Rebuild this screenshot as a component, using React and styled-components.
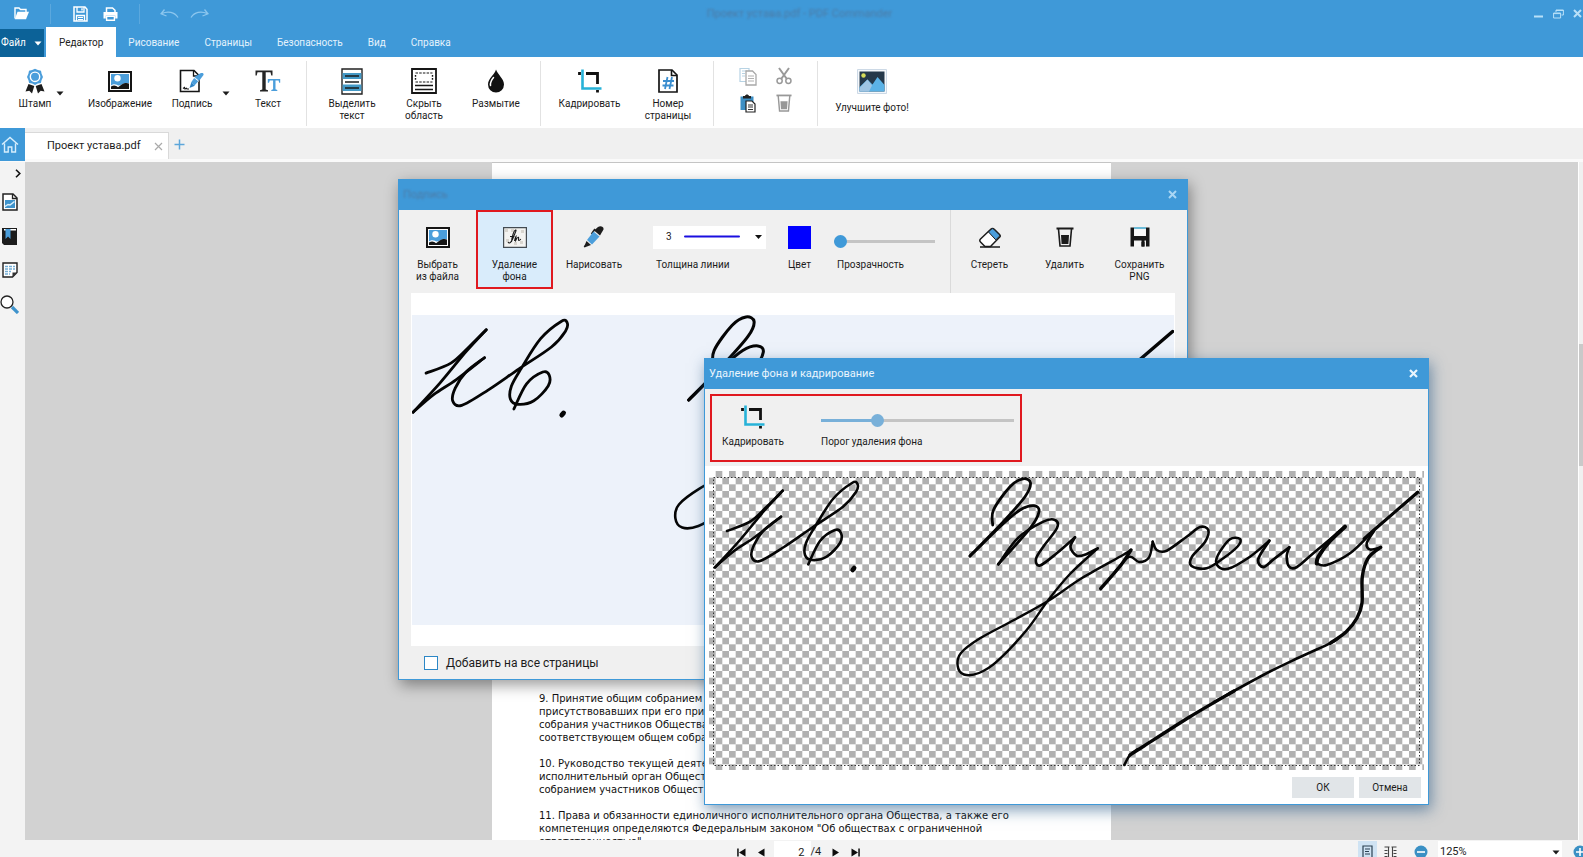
import React, { useState } from "react";
import styled, { createGlobalStyle, css } from "styled-components";

const GlobalStyle = createGlobalStyle`
  * {
    box-sizing: border-box;
  }
  body {
    margin: 0;
    overflow: hidden;
    font-family: Roboto, "Liberation Sans", sans-serif;
    font-size: 10px;
    line-height: 12px;
    color: #1c1c1c;
  }
  button, input, select {
    margin: 0;
    padding: 0;
    border: 0;
    background: none;
    font: inherit;
    color: inherit;
  }
  svg {
    display: block;
    flex: none;
  }
`;

const BLUE = "#3f99d8";

/* ---------- window frame ---------- */

const AppWindow = styled.div`
  display: flex;
  flex-direction: column;
  height: 100vh;
`;

const Header = styled.header`
  background: ${BLUE};
  color: #e4f2fc;
`;

const TitleBar = styled.div`
  display: grid;
  grid-template-columns: 1fr auto 1fr;
  align-items: center;
  height: 27px;
`;

const QuickBar = styled.div`
  display: flex;
  align-items: center;
  padding-left: 6px;
`;

const IconButton = styled.button`
  display: flex;
  align-items: center;
  justify-content: center;
  width: ${(p) => p.$w || 20}px;
  height: ${(p) => p.$h || 20}px;
`;

const QuickDivider = styled.span`
  width: 1px;
  height: 20px;
  margin: 0 14px;
  background: #5ba8de;
`;

const AppTitle = styled.div`
  padding-left: 16px;
  color: #4c7ba6;
  font-size: 11px;
  filter: blur(1px);
`;

const WindowButtons = styled.div`
  display: flex;
  justify-content: flex-end;
  color: #b9e0f8;
`;

const MenuBar = styled.nav`
  display: flex;
  height: 30px;
`;

const FileButton = styled.button`
  display: flex;
  align-items: center;
  gap: 8px;
  width: 44px;
  margin: 2px 2px 0 0;
  padding-left: 1px;
  background: #0c6298;
  color: #fff;
`;

const MenuTab = styled.button`
  padding: 2px 13px 0 12px;
  ${(p) =>
    p.$active &&
    css`
      padding: 2px 13px 0;
      background: #fff;
      color: #222;
    `}
`;

const Ribbon = styled.div`
  display: flex;
  height: 71px;
  padding: 4px 0 2px;
  background: #fff;
`;

const RibbonGroup = styled.div`
  display: flex;
  padding: 5px ${(p) => p.$right}px 0 ${(p) => p.$left}px;
  border-right: ${(p) => (p.$last ? 0 : "1px solid #e2e2e2")};
`;

const Tool = styled.button`
  display: flex;
  flex-direction: column;
  align-items: center;
  gap: ${(p) => p.$gap || 2}px;
  width: ${(p) => p.$w}px;
  white-space: nowrap;
`;

const IconSlot = styled.span`
  display: flex;
  align-items: ${(p) => (p.$end ? "flex-end" : "center")};
  justify-content: center;
  height: 30px;
`;

const CaretButton = styled.button`
  display: flex;
  width: 22px;
  height: 40px;
  padding-top: 25px;
`;

const ClipboardGrid = styled.div`
  display: grid;
  grid-template-columns: 36px 36px;
  grid-auto-rows: 27px;
  justify-items: center;
`;

/* ---------- document tabs and work area ---------- */

const TabStrip = styled.div`
  display: flex;
  height: 34px;
  background: #f0f0f0;
  border-bottom: 3px solid #fafafa;
`;

const HomeButton = styled.button`
  display: flex;
  align-items: center;
  justify-content: center;
  width: 25px;
  height: 33px;
  padding-right: 6px;
  background: ${BLUE};
  color: #d8eefc;
`;

const DocTab = styled.div`
  display: flex;
  align-items: center;
  justify-content: space-between;
  width: 144px;
  margin-top: 4px;
  padding-left: 22px;
  border: 1px solid #d9d9d9;
  border-width: 1px 1px 0 0;
  background: #fff;
  font-size: 11px;
  white-space: nowrap;
`;

const TabClose = styled(IconButton)`
  color: #aaa;
`;

const WorkArea = styled.div`
  display: flex;
  flex: 1;
  min-height: 0;
`;

const SideBar = styled.aside`
  display: flex;
  flex-direction: column;
  width: 25px;
  background: #f3f3f3;
`;

const SideChevron = styled(IconButton)`
  width: 25px;
  height: 23px;
  padding-left: 10px;
`;

const SideButton = styled(IconButton)`
  width: 19px;
  height: 34px;
`;

const Desk = styled.main`
  display: flex;
  justify-content: center;
  flex: 1;
  min-width: 0;
  overflow: hidden;
  background: #d2d2d2;
`;

const Sheet = styled.article`
  width: 619px;
  padding: 529px 47px 0;
  border-top: 1px solid #c4c4c4;
  background: #fff;
  font-family: "DejaVu Sans", sans-serif;
  font-size: 10px;
  line-height: 13px;
  color: #111;
  white-space: pre;
  p {
    margin: 0 0 13px;
  }
`;

const ScrollTrack = styled.div`
  width: 5px;
  padding-top: 182px;
  border-left: 1px solid #fff;
  background: #f0f0f0;
`;

const ScrollThumb = styled.div`
  height: 122px;
  background: #c9c9c9;
`;

const StatusBar = styled.footer`
  display: grid;
  grid-template-columns: 1fr auto 1fr;
  height: 17px;
  overflow: hidden;
  background: #f3f3f3;
  line-height: 10px;
`;

const Pager = styled.div`
  display: flex;
  align-items: center;
  height: 24px;
  padding-left: 13px;
`;

const PageInput = styled.input`
  width: 37px;
  height: 22px;
  margin-left: 4px;
  padding-right: 6px;
  background: #fff;
  font-size: 11px;
  text-align: right;
`;

const PageTotal = styled.span`
  width: 16px;
  font-size: 11px;
`;

const ViewTools = styled.div`
  display: flex;
  align-items: center;
  justify-content: flex-end;
  height: 24px;
  margin-right: -4px;
`;

const ViewButton = styled(IconButton)`
  width: 19px;
  height: 22px;
  margin-right: 4px;
  background: ${(p) => (p.$active ? "#cfe3f3" : "none")};
`;

const ZoomBox = styled.div`
  display: grid;
  align-items: center;
  width: 124px;
  height: 22px;
  margin-right: 11px;
  background: #fff;
  > * {
    grid-area: 1 / 1;
  }
  > svg {
    justify-self: end;
    margin-right: 2px;
    pointer-events: none;
  }
`;

const ZoomSelect = styled.select`
  appearance: none;
  height: 20px;
  padding-left: 2px;
  font-size: 11px;
`;

/* ---------- dialogs ---------- */

const Dialog = styled.section`
  position: absolute;
  left: ${(p) => p.$x}px;
  top: ${(p) => p.$y}px;
  width: ${(p) => p.$w}px;
  border: 1px solid ${BLUE};
  border-top: 0;
  background: ${(p) => p.$bg};
  box-shadow: 2px 5px 14px ${(p) => p.$shadow};
`;

const DialogTitle = styled.header`
  display: flex;
  align-items: center;
  justify-content: space-between;
  height: 31px;
  padding: 0 5px 0 4px;
  background: ${BLUE};
  color: ${(p) => (p.$inactive ? "#a9d6f4" : "#eaf5fd")};
  font-size: 11px;
`;

const FadedTitle = styled.span`
  color: #4c7ba6;
  filter: blur(1px);
`;

const DialogTools = styled.div`
  display: flex;
  height: 83px;
`;

const DialogTool = styled(Tool)`
  gap: 7px;
  padding-top: 12px;
`;

const MarkedTool = styled(DialogTool)`
  height: 79px;
  padding-top: 10px;
  border: 2px solid #e0191f;
  background: #d9ecfb;
`;

const Field = styled.label`
  display: flex;
  flex-direction: column;
  gap: 7px;
  width: ${(p) => p.$w}px;
  margin-left: ${(p) => p.$left}px;
  padding-top: 12px;
  white-space: nowrap;
`;

const FieldText = styled.span`
  padding-left: ${(p) => p.$indent || 0}px;
`;

const WidthBox = styled.span`
  display: grid;
  align-items: center;
  width: 113px;
  height: 23px;
  background: #fff;
  > * {
    grid-area: 1 / 1;
  }
  > svg {
    justify-self: end;
    margin-right: 4px;
    pointer-events: none;
  }
`;

const WidthSelect = styled.select`
  appearance: none;
  height: 23px;
  padding-left: 13px;
`;

const ColorInput = styled.input`
  appearance: none;
  width: 23px;
  height: 23px;
  &::-webkit-color-swatch-wrapper {
    padding: 0;
  }
  &::-webkit-color-swatch {
    border: 0;
    border-radius: 0;
  }
`;

const Range = styled.input`
  appearance: none;
  width: 100%;
  height: ${(p) => p.$h || 16}px;
  &::-webkit-slider-runnable-track {
    height: 3px;
    background: linear-gradient(
      to right,
      ${(p) => p.$fill} ${(p) => p.value}%,
      #c4c4c4 ${(p) => p.value}%
    );
  }
  &::-webkit-slider-thumb {
    appearance: none;
    width: 13px;
    height: 13px;
    margin-top: -5px;
    border-radius: 50%;
    background: ${(p) => p.$fill};
  }
`;

const ToolsDivider = styled.span`
  width: 1px;
  margin: 0 1px 0 auto;
  background: #dadada;
`;

const RightTools = styled.div`
  display: flex;
  margin-right: 10px;
`;

const Paper = styled.div`
  height: 353px;
  margin: 0 12px;
  padding: 22px 1px 21px 1px;
  background: #fff;
`;

const PaperInner = styled.div`
  height: 310px;
  background: #edf2fa;
`;

const DialogFooter = styled.footer`
  display: flex;
  align-items: center;
  height: 33px;
  padding-left: 25px;
`;

const CheckLabel = styled.label`
  display: flex;
  align-items: center;
  gap: 8px;
  font-size: 12px;
`;

const CheckBox = styled.input`
  appearance: none;
  width: 14px;
  height: 14px;
  border: 1px solid #2c87c6;
  background: #fff;
`;

const CropBar = styled.div`
  height: 77px;
  padding: 5px 0 0 5px;
  background: #f0f0f0;
`;

const CropMark = styled.div`
  display: flex;
  width: 312px;
  height: 68px;
  padding-left: 6px;
  border: 2px solid #e0191f;
`;

const CropTool = styled(Tool)`
  gap: 4px;
  padding-top: 6px;
`;

const CropField = styled(Field)`
  gap: 8px;
  padding-top: 16px;
`;

const Preview = styled.div`
  padding: 5px 4px 0;
`;

const DialogButtons = styled.footer`
  display: flex;
  justify-content: flex-end;
  gap: 5px;
  padding: 7px 7px 6px;
`;

const PushButton = styled.button`
  width: 62px;
  height: 21px;
  background: #e1e5e8;
`;

/* ---------- signature ---------- */

// every stroke is a line width and a list of points, drawn as a smooth curve
const strokes = [
  [2.6, [13, 54], [36, 44.7], [52.7, 29.7], [68.7, 13.7]],
  [2.6, [68.7, 13.7], [50, 34], [26, 63], [1, 90.3]],
  [2.6, [1, 90.3], [20, 74], [41, 60], [67, 39.7]],
  [2.6, [67, 39.7], [50, 53], [40, 68], [37.7, 80], [46, 84], [70, 70], [99, 50],
    [129, 29.7], [142, 15], [143.5, 7], [138, 6], [119, 22], [101, 49.7], [92, 66],
    [91, 78], [98, 83], [112.7, 79.7], [126, 66], [127, 56], [121, 53], [106, 64],
    [94.3, 87.3]],
  [2.8, [278.7, 48], [279.5, 33], [296, 9.7], [309, 1.8], [316.5, 6], [311, 19.7],
    [289.3, 44.7], [256, 79]],
  [2.8, [256, 79], [286, 49.7], [306, 33], [320, 28.7], [325, 34.7], [316, 51.3],
    [284.3, 87.3]],
  [2.6, [284.3, 87.3], [304, 61], [329.3, 44.7], [341, 43], [343, 51], [329.3, 69.7],
    [322, 82], [326, 88.5], [342.7, 76.3], [361, 60.3]],
  [2.6, [361, 60.3], [356.5, 70], [362.7, 78.7], [372.7, 77], [383.7, 71.3]],
  [2.4, [383.7, 71.3], [356, 97], [334.3, 123], [312.7, 153], [282.7, 184.7],
    [265, 196], [250, 197.5], [243.7, 189], [247, 176], [266, 161.3], [300, 143],
    [334, 124], [368, 101], [409, 78], [417, 73]],
  [3.4, [417, 73], [407, 88], [386.7, 111.7]],
  [2.4, [401, 95], [415, 80], [425, 85], [435, 80.5], [438.7, 64.7]],
  [2.6, [438.7, 64.7], [442.7, 73], [452.7, 73.7], [472.7, 59.7], [486, 50],
    [494.3, 53], [491, 65], [478, 79.7], [477.5, 89], [492.7, 91.3], [509.3, 81.3],
    [524, 69], [526, 62], [516, 62.3], [504, 78], [503, 88], [514, 91.8],
    [536, 79.7], [555.3, 63.7]],
  [2.8, [555.3, 63.7], [544.3, 82], [549.3, 90], [560, 82], [575.3, 70.3]],
  [2.6, [575.3, 70.3], [572.7, 79.7], [575.5, 90], [583, 90], [599.3, 76.3],
    [631, 49.7]],
  [4, [631, 49.7], [616, 64], [604.3, 79.7], [602.7, 86.5]],
  [2.6, [602.7, 86.5], [612.7, 88], [636, 76.3], [657, 56.3]],
  [3.2, [650, 62], [660, 53], [703.7, 15.3]],
  [2.6, [660, 54], [652.7, 66.3], [656, 72.5], [666.7, 70.3]],
  [3.4, [666.7, 70.3], [654, 81.3], [648.3, 99.7], [648, 126], [643, 141],
    [632, 155], [616, 166.3]],
  [2.6, [624, 161.5], [616, 166.3], [584, 181], [549.3, 198], [500, 225]],
  [3.4, [520, 214], [476, 239.7], [430, 269], [416, 278]],
  [2.6, [424, 272], [416, 278], [410.3, 288]],
];

function smooth(points) {
  let d = `M${points[0]}`;
  for (let i = 0; i < points.length - 1; i++) {
    const a = points[i - 1] || points[i];
    const b = points[i];
    const c = points[i + 1];
    const e = points[i + 2] || c;
    d += `C${b[0] + (c[0] - a[0]) / 6},${b[1] + (c[1] - a[1]) / 6} `;
    d += `${c[0] - (e[0] - b[0]) / 6},${c[1] - (e[1] - b[1]) / 6} ${c}`;
  }
  return d;
}

const SignatureInk = () => (
  <g fill="none" stroke="#050505" strokeLinecap="round" strokeLinejoin="round">
    {strokes.map(([width, ...points], i) => (
      <path key={i} d={smooth(points)} strokeWidth={width} />
    ))}
    <path d="M138.600 93L140.200 91" strokeWidth="4.500" />
  </g>
);

/* ---------- icons ---------- */

const Caret = ({ size = 8 }) => (
  <svg width={size} height="5" viewBox="0 0 8 5">
    <path d="M0.5 0.5h7L4 4.5z" fill="currentColor" />
  </svg>
);

const CloseIcon = ({ size = 9, weight = 2 }) => (
  <svg width={size} height={size} viewBox="0 0 9 9">
    <path d="M1 1l7 7M8 1L1 8" stroke="currentColor" strokeWidth={weight} />
  </svg>
);

const FolderIcon = () => (
  <svg width="15" height="13" viewBox="0 0 15 13">
    <path d="M1 11.5V1h4l1.5 1.5H12V5" fill="none" stroke="#fff" strokeWidth="1.4" />
    <path d="M3.5 4.8H15L12 12.2H0.8z" fill="#fff" />
  </svg>
);

const DiskIcon = () => (
  <svg width="15" height="16" viewBox="0 0 15 16">
    <path d="M1 1h11l2 2.2V15H1z" fill="none" stroke="#fff" strokeWidth="1.5" />
    <path d="M4 1v5h7V1M3.5 15V9.5h8V15" fill="none" stroke="#fff" strokeWidth="1.3" />
    <path d="M8.3 2.2h1.4v2.4H8.3zM5 11h5v1H5zM5 13h5v1H5z" fill="#fff" />
  </svg>
);

const PrinterIcon = () => (
  <svg width="15" height="14" viewBox="0 0 15 14">
    <path d="M3.5 5V1h6L12 3.3V5" fill="none" stroke="#fff" strokeWidth="1.5" />
    <path d="M0.5 5h14v6.5h-2.3V8.5H2.8v3H0.5z" fill="#fff" />
    <path d="M3.6 9.2h7.8v4H3.6z" fill="none" stroke="#fff" strokeWidth="1.4" />
  </svg>
);

const UndoIcon = ({ flip }) => (
  <svg width="19" height="10" viewBox="0 0 19 10">
    <path
      d="M4.5 0.5L1 4.8L6.5 7M1.5 4.6C8 1.8 14.5 3 18 8.5"
      transform={flip ? "matrix(-1 0 0 1 19 0)" : undefined}
      fill="none"
      stroke="#8cc6ee"
      strokeWidth="1.3"
    />
  </svg>
);

const MinimizeIcon = () => (
  <svg width="9" height="9" viewBox="0 0 9 9">
    <path d="M0 7.5h9" stroke="currentColor" strokeWidth="2" />
  </svg>
);

const RestoreIcon = () => (
  <svg width="11" height="10" viewBox="0 0 11 10">
    <path d="M0.6 4h7v5h-7zM0.6 4.6h7M3 3V1h7.4v5H8.5M3 1.5h7" fill="none" stroke="currentColor" />
  </svg>
);

const StampIcon = () => (
  <svg width="20" height="26" viewBox="0 0 20 26">
    <path d="M3.5 16L0.5 23.5l3.8-.7L7 25.4 9.3 18zM16.5 16l3 7.5-3.8-.7-2.7 2.6L10.7 18z" fill="#1d1d1d" />
    <path d="M10 0.8l2.9 1.3 3.1.6.6 3.1L18 9l-1.4 2.9-.7 3-3.1.7L10 17l-2.8-1.4-3.1-.7-.7-3L2 9l1.4-3.2.6-3.1 3.1-.6z" fill="#4b9edb" />
    <circle cx="10" cy="8.8" r="4.7" fill="#4b9edb" stroke="#fff" strokeWidth="1.4" />
  </svg>
);

const PictureIcon = () => (
  <svg width="24" height="21" viewBox="0 0 24 21">
    <path d="M1 1h22v19H1z" fill="#fff" stroke="#151515" strokeWidth="2" />
    <path d="M3 3h18v11L3 15z" fill="#4b9edb" />
    <circle cx="9.5" cy="7.3" r="3.2" fill="#fff" />
    <path d="M3 14.5c3-2.500 6-1 8 .5 2.500-2 6-3.500 10-3V18H3z" fill="#fff" />
    <path d="M3 15.500c3-2 5-1 7 .7 2.500-1.200 4-3.700 7-4.200 2-.2 3 0 4 .6V18H3z" fill="#151515" />
  </svg>
);

const SignIcon = () => (
  <svg width="26" height="24" viewBox="0 0 26 24">
    <path d="M1.500 1.500h13.500l5 5V22.500H1.500z" fill="#fff" stroke="#151515" strokeWidth="1.600" />
    <path d="M14.500 1.500V7h5.500" fill="none" stroke="#151515" strokeWidth="1.300" />
    <path d="M10.500 19l1.800-5.500 3.500 3.200z" fill="#2e83c4" />
    <path d="M12 13.500l3.500-5 4 3.500-4 4.500z" fill="#4b9edb" />
    <path d="M15.500 8l5.500-3.500c2-1 4-.5 3.500 1.500L20 12z" fill="#4b9edb" />
    <path d="M15 8.500l5 4" stroke="#fff" strokeWidth="0.8" />
    <path d="M4 19.500l1.500-1 .5 1.500 1.500-.8.500.8h2" fill="none" stroke="#151515" strokeWidth="1.200" />
  </svg>
);

const TextIcon = () => (
  <svg width="26" height="24" viewBox="0 0 26 24">
    <path d="M0.500 1.500h17v5h-1.200L15.500 3.300H10.700V20.500l2.300.7V22.500H5v-1.300l2.300-.7V3.300H2.500L1.700 6.500H0.500z" fill="#242424" />
    <path d="M12.800 10h12.400v3.800h-1l-.6-2.200H20.500V20.300l1.800.6V22h-6v-1.100l1.800-.6V11.600h-3.300l-.8 2.200h-1.200z" fill="#4b9edb" />
  </svg>
);

const HighlightIcon = () => (
  <svg width="22" height="27" viewBox="0 0 22 27">
    <path d="M1 1h20v25H1z" fill="#fff" stroke="#222" strokeWidth="1.400" />
    <path d="M1.600 5h18.800v6H1.600zM1.600 16.500h18.800v6.500H1.600z" fill="#4499c6" />
    <path d="M4 8h14M4 14h14M4 20h14" stroke="#1a1a1a" strokeWidth="1.600" />
  </svg>
);

const HideIcon = () => (
  <svg width="26" height="26" viewBox="0 0 26 26">
    <path d="M1 1h24v24H1z" fill="#fff" stroke="#161616" strokeWidth="1.800" />
    <path d="M4.500 5h17M4.500 14h17" stroke="#161616" strokeWidth="1.200" strokeDasharray="2.500 1.200" />
    <path d="M4.500 7v6M21.500 7v6" stroke="#161616" strokeWidth="1.400" strokeDasharray="1.800 1.200" />
    <path d="M4 17.500h18M4 21.500h18" stroke="#161616" strokeWidth="1.500" />
  </svg>
);

const DropIcon = () => (
  <svg width="18" height="24" viewBox="0 0 18 24">
    <path d="M9 0.500C8 5 1 9.500 1 15.500a8 8 0 0 0 16 0C17 9.500 10.500 5.500 9 .5z" fill="#111" />
    <path d="M6.500 8.500C4 11.500 3 13.500 3.500 16.500" fill="none" stroke="#fff" strokeWidth="1.500" strokeLinecap="round" />
  </svg>
);

const CropIcon = () => (
  <svg width="24" height="24" viewBox="0 0 24 24">
    <path d="M8 4.500h11.500V15M19.500 21v2.500M1.500 3v3" fill="none" stroke="#111" strokeWidth="2.800" />
    <path d="M4.500 0.500V19.500H23.500" fill="none" stroke="#27b2d8" strokeWidth="2.600" />
  </svg>
);

const NumberIcon = () => (
  <svg width="20" height="24" viewBox="0 0 20 24">
    <path d="M1 1h13l5 5v17H1z" fill="#fff" stroke="#151515" strokeWidth="1.700" />
    <path d="M13.500 1v5.500H19" fill="none" stroke="#151515" strokeWidth="1.600" />
    <path d="M9.500 8L7 20M14 8l-2.500 12M5 12h11M4.500 16.500h11" stroke="#3b8ecf" strokeWidth="1.800" />
  </svg>
);

const CopyIcon = () => (
  <svg width="18" height="19" viewBox="0 0 18 19">
    <path d="M1 1.500h9v13H1zM3 4h5M3 6.500h3M3 9h3" fill="none" stroke="#b7d3e4" strokeWidth="1.200" />
    <path d="M7 4h6.500L17 7.500V18H7z" fill="#fff" stroke="#a8a8a8" strokeWidth="1.300" />
    <path d="M9 9h6M9 11.500h6M9 14h6" stroke="#b0b0b0" strokeWidth="1.200" />
  </svg>
);

const ScissorsIcon = () => (
  <svg width="16" height="18" viewBox="0 0 16 18">
    <path d="M3 1l7.500 10.500M13 1L5.500 11.500" stroke="#999" strokeWidth="2" />
    <circle cx="3.600" cy="13.800" r="2.600" fill="none" stroke="#999" strokeWidth="1.500" />
    <circle cx="12.400" cy="13.800" r="2.600" fill="none" stroke="#999" strokeWidth="1.500" />
  </svg>
);

const PasteIcon = () => (
  <svg width="16" height="19" viewBox="0 0 16 19">
    <path d="M0.500 2.500h13V16H0.500z" fill="#3d8fc4" />
    <path d="M3 4.500V2h2c.5-2 3.500-2 4 0h2v2.500z" fill="#222" />
    <path d="M6 7h6l3 3v8H6z" fill="#fff" stroke="#222" strokeWidth="1.200" />
    <path d="M8 11h5M8 13h5M8 15.500h5" stroke="#333" />
  </svg>
);

const TrashIcon = ({ color = "#1b1b1b", size = 18 }) => (
  <svg width={size} height={size + 2} viewBox="0 0 18 20">
    <path d="M0.500 1.500h17" stroke={color} strokeWidth="2" />
    <path d="M2.500 2l1.500 17h10l1.500-17" fill="none" stroke={color} strokeWidth="1.600" />
    <path d="M5 8h8l-.6 9H5.600z" fill={color} />
  </svg>
);

const PhotoIcon = () => (
  <svg width="30" height="25" viewBox="0 0 30 25">
    <path d="M0.500 0.500h29v24H0.500z" fill="#f4f7fb" stroke="#ccd9e6" />
    <path d="M2.500 2.500h25v20h-25z" fill="#25384a" />
    <circle cx="6.500" cy="6.500" r="2.200" fill="#d6dc5a" />
    <path d="M2.500 18l8-7.500 5 5 5-7.500 7 8v6.500h-25z" fill="#5bb2e6" />
    <path d="M2.500 19l8-8.500 4.500 6-3 6H2.500z" fill="#9fc4e2" />
  </svg>
);

const HomeIcon = () => (
  <svg width="18" height="18" viewBox="0 0 18 18">
    <path d="M1 8.500L9 1.500l8 7M3.500 7.500V16h3.700v-5h3.600v5h3.700V7.500" fill="none" stroke="currentColor" strokeWidth="1.400" />
  </svg>
);

const PlusIcon = () => (
  <svg width="11" height="11" viewBox="0 0 11 11">
    <path d="M5.500 0.500v10M0.500 5.500h10" stroke="#5ca6da" strokeWidth="1.500" />
  </svg>
);

const ThumbsIcon = () => (
  <svg width="16" height="18" viewBox="0 0 16 18">
    <path d="M1 1h10l4 4v12H1z" fill="#fff" stroke="#222" strokeWidth="1.500" />
    <path d="M10.500 1v4.500H15" fill="none" stroke="#222" strokeWidth="1.300" />
    <path d="M3 7h10v8H3z" fill="#3e93cc" />
    <path d="M3 13.500l3-2 2 .5 4.500-3.500" fill="none" stroke="#d9f0fc" strokeWidth="1.500" />
  </svg>
);

const BookmarkIcon = () => (
  <svg width="15" height="17" viewBox="0 0 15 17">
    <path d="M0 0h15v17H2L0 15z" fill="#1c1c1c" />
    <path d="M2 1h12v1.500H2z" fill="#fff" />
    <path d="M3.500 1h5v10L6 8.500 3.500 11z" fill="#4b9edb" />
  </svg>
);

const NotesIcon = () => (
  <svg width="16" height="16" viewBox="0 0 16 16">
    <path d="M1 1h14v9.500L10.500 15H1z" fill="#fff" stroke="#222" strokeWidth="1.400" />
    <path d="M15 10.500h-4.500V15z" fill="#333" />
    <path d="M3 4.500h10M3 7h10M3 9.500h6M3 12h5" stroke="#74aed6" strokeWidth="1.300" strokeDasharray="3 1" />
  </svg>
);

const SearchIcon = () => (
  <svg width="19" height="19" viewBox="0 0 19 19">
    <circle cx="7" cy="7" r="6" fill="#fff" stroke="#222" strokeWidth="1.300" />
    <path d="M12 12l6 6" stroke="#3e93cc" strokeWidth="3.200" />
  </svg>
);

const ChevronIcon = () => (
  <svg width="6" height="9" viewBox="0 0 6 9">
    <path d="M1 0.800L4.800 4.500 1 8.200" fill="none" stroke="#111" strokeWidth="1.600" />
  </svg>
);

const RemoveBgIcon = () => (
  <svg width="24" height="21" viewBox="0 0 24 21">
    <path d="M0.600 0.600h22.800v19.800H0.600z" fill="#f3f3f1" stroke="#444b52" strokeWidth="1.200" />
    <path d="M2 2h3v3H2zM8 2h3v3H8zM18 3h3v3h-3zM3 12h3v3H3zM17 14h3v3h-3zM11 15h3v3h-3z" fill="#d8d5cf" />
    <path d="M5 15c1.500 3 4-1 5.500-5S14 2.500 12.500 3 9 9 8.500 15M7 9.500h4.500M11.500 14c.5-2.500 1-4 1.500-4.500-.3 2-.5 3-.3 4 1-2.500 2-3.500 2.800-3.200.5.600-.5 3 .3 3.200s1.500-.8 2-1.500" fill="none" stroke="#181818" strokeWidth="1.100" />
  </svg>
);

const PenIcon = () => (
  <svg width="22" height="22" viewBox="0 0 22 22">
    <path d="M11 4.500l4-3.500c2.500-1.500 6-.5 5.500 2.500L17 9.500z" fill="#1d1d1d" />
    <path d="M12 3L8.500 8" stroke="#1d1d1d" strokeWidth="1.600" />
    <path d="M10.500 5.500l6 5L9 18.500l-5-4.500z" fill="#4b9edb" />
    <path d="M3.500 15l4.500 4-4 1.500-2.500 1-.8-1 1.300-2z" fill="#1d1d1d" />
  </svg>
);

const EraserIcon = () => (
  <svg width="22" height="21" viewBox="0 0 22 21">
    <path d="M11.500 2.500c1.500-1.500 2.500-1.500 4 0l5 5c1 1 1 1.800 0 2.800L11.500 19.500H6L1.500 15c-1-1-1-2 0-3z" fill="#fff" stroke="#1b1b1b" strokeWidth="1.500" />
    <path d="M9.500 5l3-3c.8-.6 1.500-.5 2.200.2L20 7.500c.7.800.7 1.400 0 2.100l-3.200 3.300z" fill="#4b9edb" stroke="#1b1b1b" />
    <path d="M1 20h20" stroke="#1b1b1b" strokeWidth="1.500" />
  </svg>
);

const SavePngIcon = () => (
  <svg width="20" height="20" viewBox="0 0 20 20">
    <path d="M0.500 0.500H4v8.500h12V0.500h3.500v19h-3.500v-6h-1.500v6h-3v-6H4v6H0.500z" fill="#151515" />
    <path d="M4 1h12" stroke="#3fa8cf" strokeWidth="1.500" />
    <path d="M4.500 2h11v7h-11zM4.500 15h6v4.500h-6z" fill="#f6f6f6" />
    <path d="M11.500 15h3v4.500h-3z" fill="#151515" />
  </svg>
);

const StepIcon = ({ bar, flip }) => (
  <svg width="9" height="9" viewBox="0 0 9 9">
    <g transform={flip ? "matrix(-1 0 0 1 9 0)" : undefined} fill="#0d0d0d">
      {bar && <path d="M0.200 0.500h1.500v8H0.200z" />}
      <path d="M8.500 0.500v8L2 4.500z" />
    </g>
  </svg>
);

const SinglePageIcon = () => (
  <svg width="11" height="14" viewBox="0 0 11 14">
    <path d="M1 1h9v12H1zM3 4h5M3 6.500h4M3 9h5" fill="none" stroke="#2b4152" strokeWidth="1.200" />
  </svg>
);

const TwoPageIcon = () => (
  <svg width="13" height="13" viewBox="0 0 13 13">
    <path d="M0.500 1h5M7.500 1h5M4.500 1v12M8.500 1v12M0.500 4.500h3M9.500 4.500h3M0.500 7.500h3M9.500 7.500h3M0.500 10.500h3M9.500 10.500h3" fill="none" stroke="#444" strokeWidth="1.100" />
  </svg>
);

const ZoomIcon = ({ plus }) => (
  <svg width="14" height="14" viewBox="0 0 14 14">
    <circle cx="7" cy="7" r="6.500" fill="#3a90c4" />
    <path d={plus ? "M3 7h8M7 3v8" : "M3 7h8"} stroke="#fff" strokeWidth="1.600" />
  </svg>
);

/* ---------- screens ---------- */

const menuTabs = ["Редактор", "Рисование", "Страницы", "Безопасность", "Вид", "Справка"];

function RibbonTool({ icon, lines, w, gap }) {
  return (
    <Tool $w={w} $gap={gap}>
      <IconSlot>{icon}</IconSlot>
      <span>
        {lines.map((line) => (
          <div key={line}>{line}</div>
        ))}
      </span>
    </Tool>
  );
}

function TopBar() {
  return (
    <Header>
      <TitleBar>
        <QuickBar>
          <IconButton aria-label="Открыть" $w={30}><FolderIcon /></IconButton>
          <QuickDivider />
          <IconButton aria-label="Сохранить" $w={30}><DiskIcon /></IconButton>
          <IconButton aria-label="Печать" $w={30}><PrinterIcon /></IconButton>
          <QuickDivider />
          <IconButton aria-label="Отменить" $w={30}><UndoIcon /></IconButton>
          <IconButton aria-label="Повторить" $w={30}><UndoIcon flip /></IconButton>
        </QuickBar>
        <AppTitle>Проект устава.pdf - PDF Commander</AppTitle>
        <WindowButtons>
          <IconButton aria-label="Свернуть" $w={12}><MinimizeIcon /></IconButton>
          <IconButton aria-label="Восстановить" $w={28}><RestoreIcon /></IconButton>
          <IconButton aria-label="Закрыть" $w={11}><CloseIcon /></IconButton>
        </WindowButtons>
      </TitleBar>
      <MenuBar>
        <FileButton>Файл <Caret /></FileButton>
        {menuTabs.map((name, i) => (
          <MenuTab key={name} $active={i === 0}>{name}</MenuTab>
        ))}
      </MenuBar>
    </Header>
  );
}

function RibbonBar() {
  return (
    <Ribbon>
      <RibbonGroup $left={14} $right={14}>
        <RibbonTool w={42} icon={<StampIcon />} lines={["Штамп"]} />
        <CaretButton aria-label="Виды штампов"><Caret /></CaretButton>
        <RibbonTool w={84} icon={<PictureIcon />} lines={["Изображение"]} />
        <RibbonTool w={60} icon={<SignIcon />} lines={["Подпись"]} />
        <CaretButton aria-label="Виды подписей"><Caret /></CaretButton>
        <RibbonTool w={48} icon={<TextIcon />} lines={["Текст"]} />
      </RibbonGroup>
      <RibbonGroup $left={9} $right={8}>
        <RibbonTool w={72} icon={<HighlightIcon />} lines={["Выделить", "текст"]} />
        <RibbonTool w={72} icon={<HideIcon />} lines={["Скрыть", "область"]} />
        <RibbonTool w={72} icon={<DropIcon />} lines={["Размытие"]} />
      </RibbonGroup>
      <RibbonGroup $left={9} $right={6}>
        <RibbonTool w={79} icon={<CropIcon />} lines={["Кадрировать"]} />
        <RibbonTool w={78} icon={<NumberIcon />} lines={["Номер", "страницы"]} />
      </RibbonGroup>
      <RibbonGroup $left={16} $right={15}>
        <ClipboardGrid>
          <IconButton aria-label="Копировать"><CopyIcon /></IconButton>
          <IconButton aria-label="Вырезать"><ScissorsIcon /></IconButton>
          <IconButton aria-label="Вставить"><PasteIcon /></IconButton>
          <IconButton aria-label="Удалить"><TrashIcon color="#989898" size={16} /></IconButton>
        </ClipboardGrid>
      </RibbonGroup>
      <RibbonGroup $left={9} $right={0} $last>
        <RibbonTool w={90} gap={6} icon={<PhotoIcon />} lines={["Улучшите фото!"]} />
      </RibbonGroup>
    </Ribbon>
  );
}

function DocumentSheet() {
  return (
    <Sheet>
      <p>
        9. Принятие общим собранием{"\n"}
        присутствовавших при его принятии{"\n"}
        собрания участников Общества{"\n"}
        соответствующем общем собрании
      </p>
      <p>
        10. Руководство текущей деятельностью{"\n"}
        исполнительный орган Общества{"\n"}
        собранием участников Общества
      </p>
      <p>
        11. Права и обязанности единоличного исполнительного органа Общества, а также его{"\n"}
        компетенция определяются Федеральным законом "Об обществах с ограниченной{"\n"}
        ответственностью".
      </p>
    </Sheet>
  );
}

function SignatureDialog() {
  const [opacity, setOpacity] = useState(0);
  return (
    <Dialog $x={398} $y={179} $w={790} $bg="#f0f0f0" $shadow="rgba(0, 0, 0, 0.4)">
      <DialogTitle $inactive>
        <FadedTitle>Подпись</FadedTitle>
        <IconButton aria-label="Закрыть окно подписи"><CloseIcon /></IconButton>
      </DialogTitle>
      <DialogTools>
        <DialogTool $w={77}>
          <IconSlot><PictureIcon /></IconSlot>
          <span>Выбрать<br />из файла</span>
        </DialogTool>
        <MarkedTool $w={77}>
          <IconSlot><RemoveBgIcon /></IconSlot>
          <span>Удаление<br />фона</span>
        </MarkedTool>
        <DialogTool $w={82}>
          <IconSlot><PenIcon /></IconSlot>
          <span>Нарисовать</span>
        </DialogTool>
        <Field $left={18} $w={113}>
          <IconSlot>
            <WidthBox>
              <WidthSelect defaultValue="3">
                <option>3</option>
              </WidthSelect>
              <svg width="78" height="6" viewBox="0 0 78 6">
                <path d="M1 2.500h54" stroke="#1a0fe0" strokeWidth="2" strokeLinecap="round" />
                <path d="M71 1h7l-3.500 4z" fill="#111" />
              </svg>
            </WidthBox>
          </IconSlot>
          <FieldText $indent={3}>Толщина линии</FieldText>
        </Field>
        <Field $left={22} $w={23}>
          <IconSlot>
            <ColorInput type="color" defaultValue="#0000ff" />
          </IconSlot>
          <FieldText>Цвет</FieldText>
        </Field>
        <Field $left={23} $w={101}>
          <IconSlot $end>
            <Range
              type="range"
              $h={22}
              $fill="#3f99d8"
              value={opacity}
              onChange={(e) => setOpacity(e.target.value)}
            />
          </IconSlot>
          <FieldText $indent={3}>Прозрачность</FieldText>
        </Field>
        <ToolsDivider />
        <RightTools>
          <DialogTool $w={75}>
            <IconSlot><EraserIcon /></IconSlot>
            <span>Стереть</span>
          </DialogTool>
          <DialogTool $w={75}>
            <IconSlot><TrashIcon /></IconSlot>
            <span>Удалить</span>
          </DialogTool>
          <DialogTool $w={75}>
            <IconSlot><SavePngIcon /></IconSlot>
            <span>Сохранить<br />PNG</span>
          </DialogTool>
        </RightTools>
      </DialogTools>
      <Paper>
        <PaperInner>
          <svg width="100%" height="100%" viewBox="0 0 705 288" preserveAspectRatio="none">
            <SignatureInk />
          </svg>
        </PaperInner>
      </Paper>
      <DialogFooter>
        <CheckLabel>
          <CheckBox type="checkbox" />
          Добавить на все страницы
        </CheckLabel>
      </DialogFooter>
    </Dialog>
  );
}

function BackgroundDialog() {
  const [threshold, setThreshold] = useState(28);
  return (
    <Dialog $x={704} $y={358} $w={725} $bg="#fff" $shadow="rgba(40, 90, 135, 0.6)">
      <DialogTitle>
        Удаление фона и кадрирование
        <IconButton aria-label="Закрыть"><CloseIcon weight={2.2} /></IconButton>
      </DialogTitle>
      <CropBar>
        <CropMark>
          <CropTool $w={70}>
            <IconSlot><CropIcon /></IconSlot>
            Кадрировать
          </CropTool>
          <CropField $left={33} $w={193}>
            <Range
              type="range"
              $fill="#78b0d9"
              value={threshold}
              onChange={(e) => setThreshold(e.target.value)}
            />
            <FieldText>Порог удаления фона</FieldText>
          </CropField>
        </CropMark>
      </CropBar>
      <Preview>
        <svg width="100%" viewBox="0 0 715 299">
          <defs>
            <pattern id="checks" width="13.333" height="13.333" patternUnits="userSpaceOnUse">
              <path d="M6.667 0h6.667v6.667H6.667zM0 6.667h6.667v6.667H0z" fill="#b1b1b1" />
            </pattern>
          </defs>
          <rect width="715" height="299" fill="url(#checks)" />
          <path d="M4.500 6.500h706v288h-706z" fill="none" stroke="#333" strokeDasharray="1.500 2" />
          <g transform="translate(5 6)">
            <SignatureInk />
          </g>
        </svg>
      </Preview>
      <DialogButtons>
        <PushButton>ОК</PushButton>
        <PushButton>Отмена</PushButton>
      </DialogButtons>
    </Dialog>
  );
}

export default function App() {
  return (
    <AppWindow>
      <GlobalStyle />
      <TopBar />
      <RibbonBar />
      <TabStrip>
        <HomeButton aria-label="Домой"><HomeIcon /></HomeButton>
        <DocTab>
          Проект устава.pdf
          <TabClose aria-label="Закрыть вкладку">
            <CloseIcon weight={1.2} />
          </TabClose>
        </DocTab>
        <IconButton aria-label="Новая вкладка" $h={32}><PlusIcon /></IconButton>
      </TabStrip>
      <WorkArea>
        <SideBar>
          <SideChevron aria-label="Развернуть"><ChevronIcon /></SideChevron>
          <SideButton aria-label="Миниатюры"><ThumbsIcon /></SideButton>
          <SideButton aria-label="Закладки"><BookmarkIcon /></SideButton>
          <SideButton aria-label="Заметки"><NotesIcon /></SideButton>
          <SideButton aria-label="Поиск"><SearchIcon /></SideButton>
        </SideBar>
        <Desk>
          <DocumentSheet />
        </Desk>
        <ScrollTrack>
          <ScrollThumb />
        </ScrollTrack>
      </WorkArea>
      <StatusBar>
        <span />
        <Pager>
          <IconButton aria-label="Первая страница" $w={19}><StepIcon bar /></IconButton>
          <IconButton aria-label="Предыдущая страница" $w={19}><StepIcon /></IconButton>
          <PageInput aria-label="Страница" defaultValue="2" />
          <PageTotal>/4</PageTotal>
          <IconButton aria-label="Следующая страница" $w={19}><StepIcon flip /></IconButton>
          <IconButton aria-label="Последняя страница" $w={19}><StepIcon bar flip /></IconButton>
        </Pager>
        <ViewTools>
          <ViewButton aria-label="Одна страница" $active><SinglePageIcon /></ViewButton>
          <ViewButton aria-label="Две страницы"><TwoPageIcon /></ViewButton>
          <IconButton aria-label="Уменьшить" $w={34}><ZoomIcon /></IconButton>
          <ZoomBox>
            <ZoomSelect aria-label="Масштаб" defaultValue="125%">
              <option>125%</option>
            </ZoomSelect>
            <Caret />
          </ZoomBox>
          <IconButton aria-label="Увеличить" $w={14}><ZoomIcon plus /></IconButton>
        </ViewTools>
      </StatusBar>
      <SignatureDialog />
      <BackgroundDialog />
    </AppWindow>
  );
}
